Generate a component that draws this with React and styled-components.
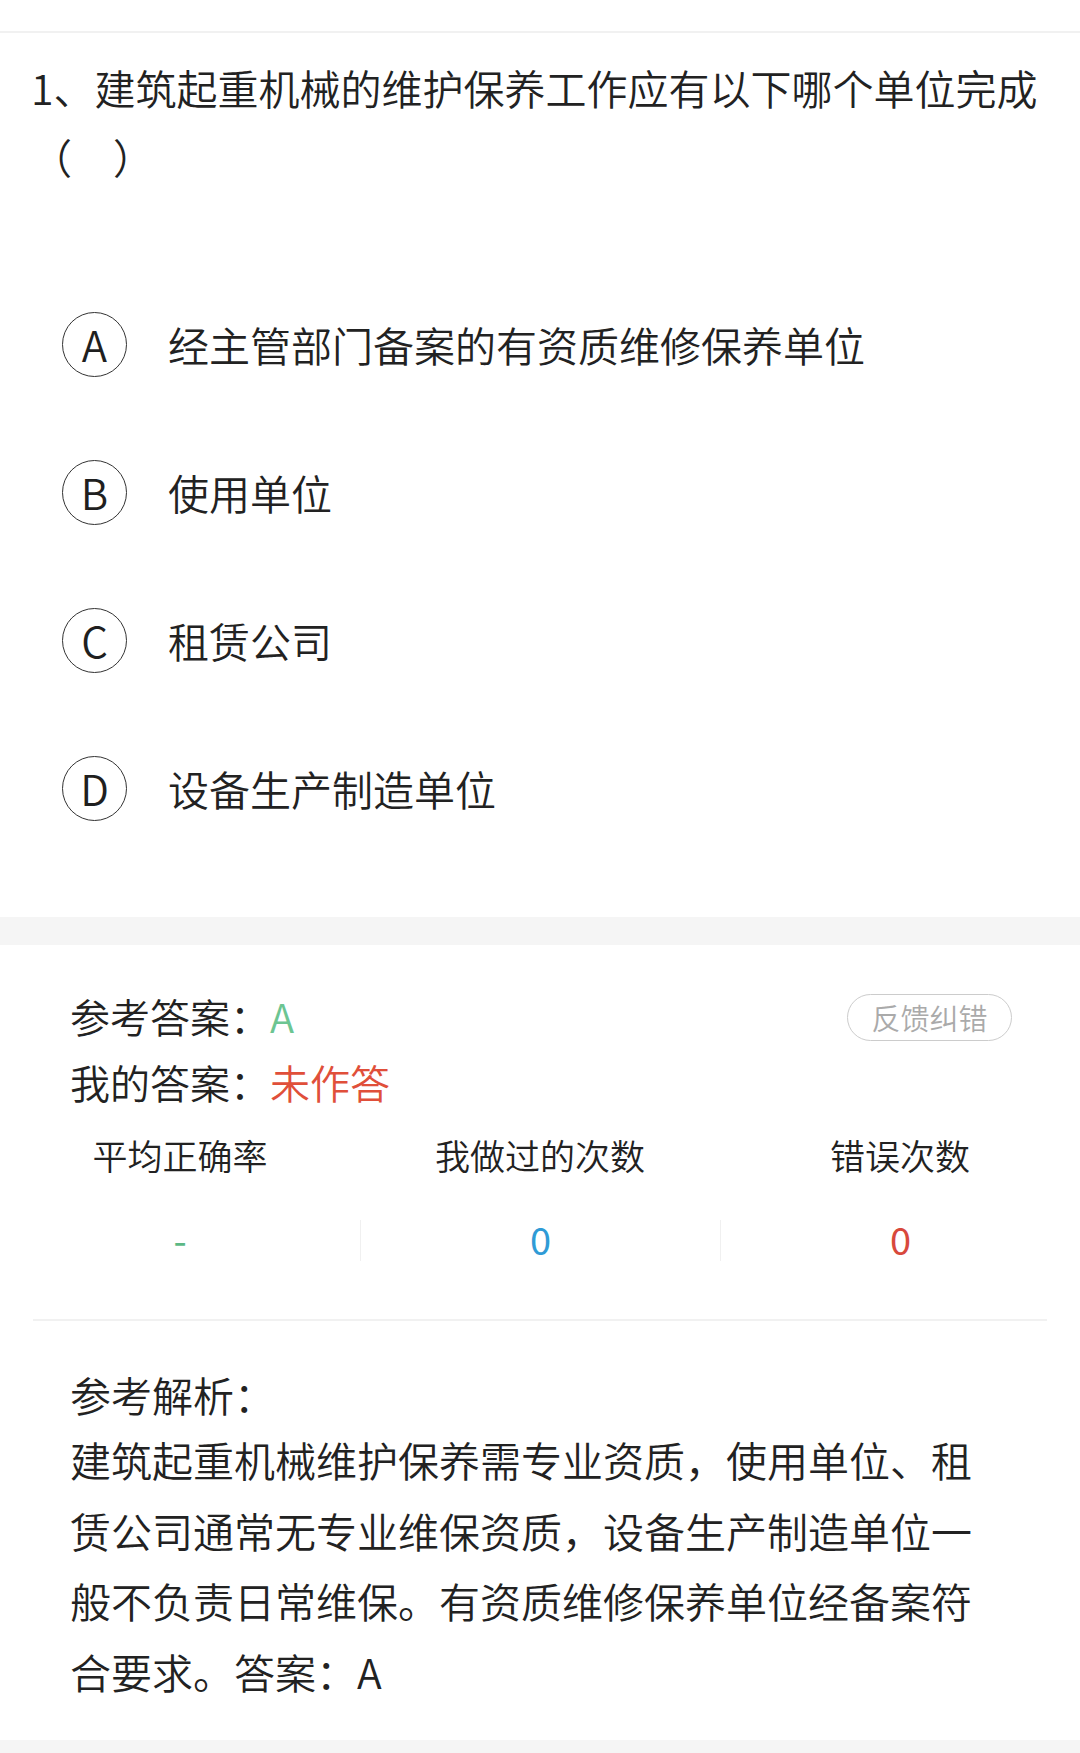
import React from "react";
import styled, { createGlobalStyle } from "styled-components";

const Global = createGlobalStyle`
  html, body { margin: 0; padding: 0; background: #ffffff; }
  body {
    font-family: "Noto Sans CJK SC", "Noto Sans", sans-serif;
    font-weight: 350;
    color: #222222;
    -webkit-font-smoothing: antialiased;
  }
  * { box-sizing: border-box; }
`;

const Page = styled.div`
  width: 1080px;
  min-height: 1753px;
  background: #ffffff;
  display: flex;
  flex-direction: column;
`;

const TopStrip = styled.div`
  height: 33px;
  border-bottom: 2px solid #f1f1f1;
`;

const Question = styled.div`
  padding: 20px 32px 0 31px;
  font-size: 41px;
  line-height: 69px;
  color: #222222;
`;

const Options = styled.div`
  margin-top: 79px;
  padding-bottom: 55px;
  display: flex;
  flex-direction: column;
`;

const OptionRow = styled.div`
  height: 148px;
  display: flex;
  align-items: center;
  padding-left: 62px;
  gap: 41px;
`;

const Circle = styled.div`
  width: 65px;
  height: 65px;
  border-radius: 50%;
  border: 1.5px solid #333333;
  display: flex;
  align-items: center;
  justify-content: center;
  font-size: 42px;
  line-height: 1;
  color: #1f1f1f;
  flex: none;
`;

const OptionText = styled.div`
  font-size: 41px;
  line-height: 60px;
  color: #222222;
`;

const Band = styled.div`
  height: ${(p) => p.$h}px;
  background: #f5f5f5;
  flex: none;
`;

const AnswerBlock = styled.div`
  padding: 38px 68px 0 70px;
  display: flex;
  align-items: flex-start;
  justify-content: space-between;
`;

const AnswerLines = styled.div`
  display: flex;
  flex-direction: column;
`;

const AnswerLine = styled.div`
  font-size: 40px;
  line-height: 66px;
  color: #222222;
`;

const Accent = styled.span`
  color: ${(p) => p.$color};
`;

const FeedbackButton = styled.button`
  margin-top: 11px;
  width: 165px;
  height: 47px;
  border-radius: 24px;
  border: 1.5px solid #cccccc;
  background: #ffffff;
  color: #aaaaaa;
  font-family: "Noto Sans CJK SC", sans-serif;
  font-weight: 350;
  font-size: 29px;
  line-height: 1;
  padding: 0;
  display: flex;
  align-items: center;
  justify-content: center;
`;

const StatsGrid = styled.div`
  margin-top: 10px;
  display: grid;
  grid-template-columns: repeat(3, 1fr);
`;

const StatCol = styled.div`
  display: flex;
  flex-direction: column;
  align-items: stretch;
`;

const StatLabel = styled.div`
  font-size: 35px;
  line-height: 60px;
  text-align: center;
  color: #222222;
`;

const StatValue = styled.div`
  margin-top: 35px;
  height: 41px;
  font-size: 38px;
  font-weight: 400;
  line-height: 38px;
  text-align: center;
  color: ${(p) => p.$color};
  border-left: ${(p) => (p.$sep ? "1.5px solid #f0f0f0" : "none")};
`;

const Divider = styled.div`
  margin: 58px 33px 0 33px;
  height: 2px;
  background: #f1f1f1;
`;

const Explanation = styled.div`
  padding: 43px 72px 34px 70px;
  display: flex;
  flex-direction: column;
`;

const ExplainTitle = styled.div`
  font-size: 41px;
  line-height: 60px;
  color: #222222;
`;

const ExplainBody = styled.div`
  font-size: 41px;
  line-height: 70.5px;
  color: #222222;
`;

const options = [
  { key: "A", text: "经主管部门备案的有资质维修保养单位" },
  { key: "B", text: "使用单位" },
  { key: "C", text: "租赁公司" },
  { key: "D", text: "设备生产制造单位" },
];

const stats = [
  { label: "平均正确率", value: "-", color: "#5cb885" },
  { label: "我做过的次数", value: "0", color: "#2f9bd6" },
  { label: "错误次数", value: "0", color: "#d8493c" },
];

export default function App() {
  return (
    <>
      <Global />
      <Page>
        <TopStrip />
        <Question>1、建筑起重机械的维护保养工作应有以下哪个单位完成（　）</Question>
        <Options>
          {options.map((o) => (
            <OptionRow key={o.key}>
              <Circle>{o.key}</Circle>
              <OptionText>{o.text}</OptionText>
            </OptionRow>
          ))}
        </Options>
        <Band $h={28} />
        <AnswerBlock>
          <AnswerLines>
            <AnswerLine>
              参考答案：<Accent $color="#6cc592">A</Accent>
            </AnswerLine>
            <AnswerLine>
              我的答案：<Accent $color="#e04f3a">未作答</Accent>
            </AnswerLine>
          </AnswerLines>
          <FeedbackButton>反馈纠错</FeedbackButton>
        </AnswerBlock>
        <StatsGrid>
          {stats.map((s, i) => (
            <StatCol key={s.label}>
              <StatLabel>{s.label}</StatLabel>
              <StatValue $color={s.color} $sep={i > 0}>
                {s.value}
              </StatValue>
            </StatCol>
          ))}
        </StatsGrid>
        <Divider />
        <Explanation>
          <ExplainTitle>参考解析：</ExplainTitle>
          <ExplainBody>
            建筑起重机械维护保养需专业资质，使用单位、租赁公司通常无专业维保资质，设备生产制造单位一般不负责日常维保。有资质维修保养单位经备案符合要求。答案：A
          </ExplainBody>
        </Explanation>
        <Band $h={20} />
      </Page>
    </>
  );
}
